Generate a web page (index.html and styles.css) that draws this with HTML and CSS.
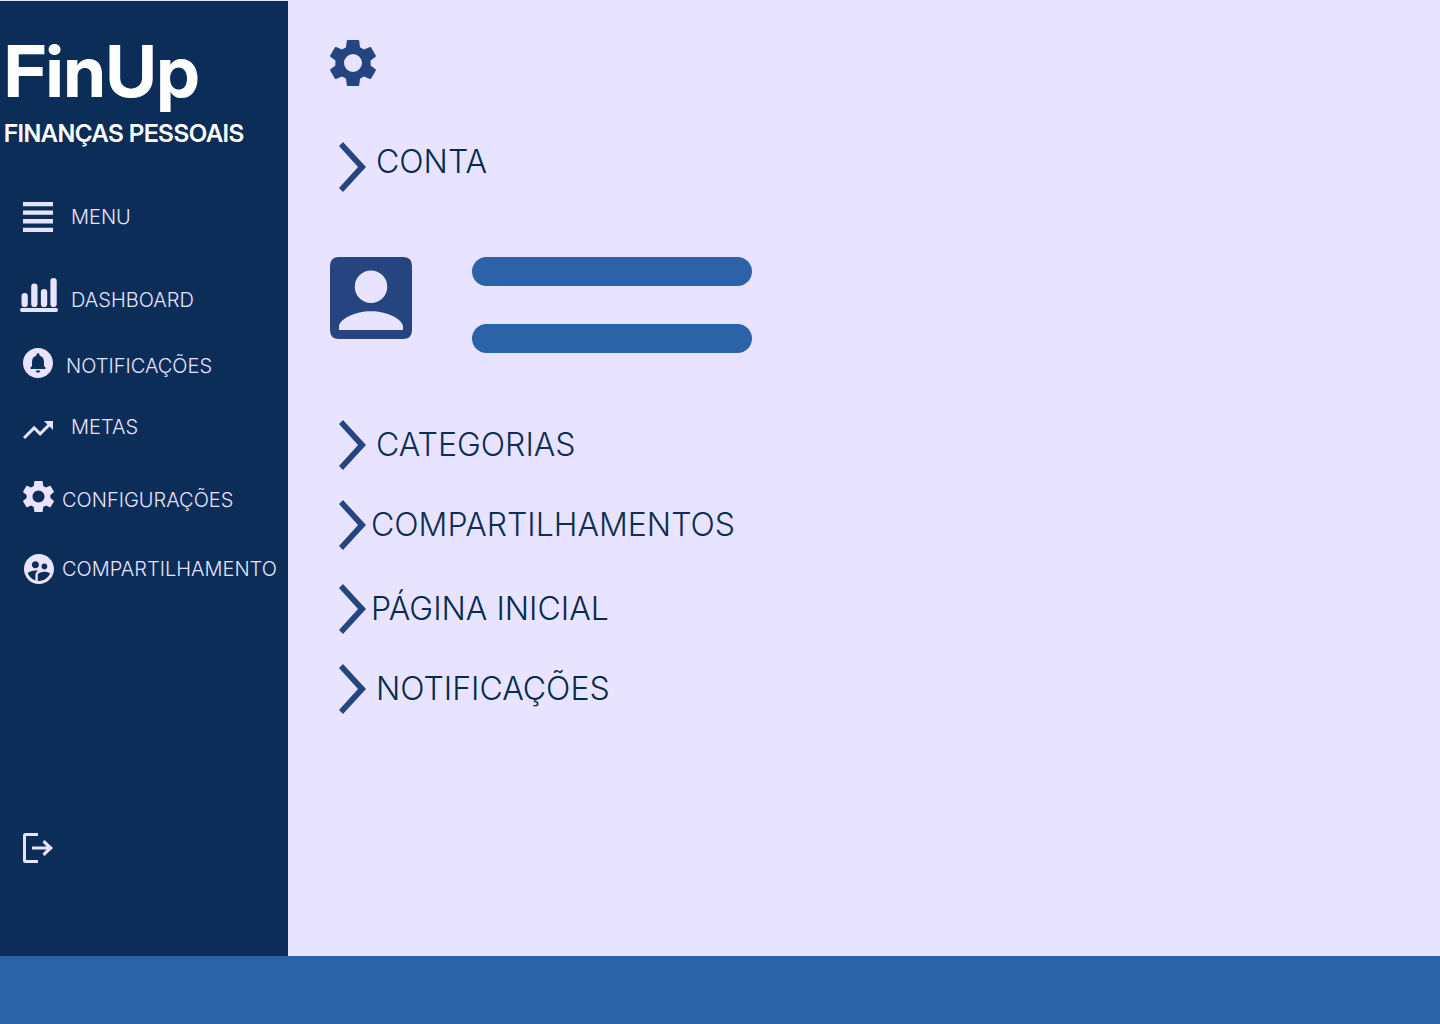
FILE: index.html
```html
<!DOCTYPE html>
<html lang="pt-BR">
<head>
<meta charset="utf-8">
<meta name="viewport" content="width=device-width, initial-scale=1">
<title>FinUp - Configurações</title>
<link rel="stylesheet" href="styles.css">
</head>
<body>
<svg class="sprite" aria-hidden="true">
  <symbol id="gear" viewBox="0 0 46 46">
    <path fill-rule="evenodd" d="M17.6 0H28.4Q29 0 29.2 .8L30 7.3L34 9.5L39.900 7Q40.600 6.800 41 7.300L45.800 15.500Q46.100 16.200 45.600 16.700L40.600 20.600V25.400L45.600 29.300Q46.100 29.800 45.800 30.500L41 38.700Q40.600 39.200 39.900 39L34 36.500L30 38.700L29.200 45.200Q29 46 28.400 46H17.600Q17 46 16.800 45.200L16 38.700L12 36.500L6.100 39Q5.400 39.200 5 38.700L.200 30.500Q-.1 29.800 .4 29.300L5.400 25.400V20.600L.4 16.700Q-.1 16.200 .2 15.500L5 7.300Q5.400 6.800 6.100 7L12 9.500L16 7.300L16.800 .8Q17 0 17.600 0ZM23 14a9 9 0 1 0 0 18a9 9 0 1 0 0-18Z"/>
  </symbol>
  <symbol id="chevron" viewBox="0 0 27 50">
    <path d="M0 4L4 0L27 25L4 50L0 46L19 25Z"/>
  </symbol>
</svg>

<div class="layout">
  <aside class="sidebar">
    <div class="brand">
      <p class="brand-name">FinUp</p>
      <p class="brand-tagline">FINANÇAS PESSOAIS</p>
    </div>
    <nav class="nav" aria-label="Principal">
      <a class="nav-link menu" href="#menu">
        <svg class="icon" viewBox="0 0 30 30" aria-hidden="true"><path d="M0 0h30v4.200H0zM0 8.400h30v4.400H0zM0 17h30v4.400H0zM0 25.700h30V30H0z"/></svg>
        <span>MENU</span>
      </a>
      <a class="nav-link dashboard" href="#dashboard">
        <svg class="icon icon-chart" viewBox="0 0 38 34" aria-hidden="true"><rect x="1.500" y="15" width="6.300" height="14" rx="3.100"/><rect x="11.200" y="5.500" width="6.300" height="23.500" rx="3.100"/><rect x="20.900" y="11" width="6.300" height="18" rx="3.100"/><rect x="30.400" y="0" width="6.300" height="29" rx="3.100"/><rect y="30" width="38" height="4" rx="2"/></svg>
        <span>DASHBOARD</span>
      </a>
      <a class="nav-link notifications" href="#notificacoes">
        <svg class="icon" viewBox="2 2 20 20" aria-hidden="true"><path d="M12 2C6.480 2 2 6.480 2 12s4.480 10 10 10 10-4.480 10-10S17.520 2 12 2zm0 16.500c-.83 0-1.500-.67-1.500-1.500h3c0 .83-.67 1.500-1.500 1.500zm5-2.500H7v-1l1-1v-2.610C8 9.270 9.030 7.470 11 7v-.5c0-.57.43-1 1-1s1 .43 1 1V7c1.970.47 3 2.280 3 4.390V14l1 1v1z"/></svg>
        <span>NOTIFICAÇÕES</span>
      </a>
      <a class="nav-link goals" href="#metas">
        <svg class="icon icon-trend" viewBox="2 6 20 12" aria-hidden="true"><path d="M16 6l2.290 2.290-4.880 4.880-4-4L2 16.590 3.410 18l6-6 4 4 6.300-6.290L22 12V6z"/></svg>
        <span>METAS</span>
      </a>
      <a class="nav-link settings" href="#configuracoes" aria-current="page">
        <svg class="icon icon-gear" aria-hidden="true"><use href="#gear"/></svg>
        <span>CONFIGURAÇÕES</span>
      </a>
      <a class="nav-link sharing" href="#compartilhamento">
        <svg class="icon" viewBox="2 2 20 20" aria-hidden="true"><path d="M11.990 2c-5.520 0-10 4.480-10 10s4.480 10 10 10 10-4.480 10-10-4.480-10-10-10zm3.610 6.340c1.070 0 1.930.86 1.930 1.930 0 1.070-.86 1.930-1.930 1.930-1.070 0-1.930-.86-1.930-1.930-.01-1.070.86-1.930 1.930-1.930zm-6-1.580c1.300 0 2.360 1.060 2.360 2.360 0 1.300-1.060 2.360-2.360 2.360s-2.360-1.060-2.360-2.360c0-1.310 1.050-2.360 2.360-2.360zm0 9.130v3.750c-2.400-.75-4.300-2.600-5.140-4.960 1.050-1.120 3.670-1.690 5.140-1.690.53 0 1.200.08 1.900.22-1.640.87-1.900 2.020-1.900 2.680zM11.990 20c-.27 0-.53-.01-.79-.04v-4.070c0-1.420 2.940-2.130 4.400-2.130 1.070 0 2.920.39 3.840 1.150-1.170 2.970-4.060 5.090-7.450 5.090z"/></svg>
        <span>COMPARTILHAMENTO</span>
      </a>
    </nav>
    <a class="logout" href="#sair" aria-label="Sair">
      <svg class="icon" viewBox="0 0 30 30" aria-hidden="true"><path d="M15 0v3H3v24h12v3H2.500Q0 30 0 27.500v-25Q0 0 2.500 0zM9 13.500h14.500l-4-4.200 2-2.300L30 15l-8.500 8-2-2.200 4-4.300H9z"/></svg>
    </a>
  </aside>

  <main class="content">
    <svg class="page-icon" role="img" aria-label="Configurações"><use href="#gear"/></svg>

    <button class="section section-open deep" type="button" aria-expanded="true">
      <svg class="chevron" aria-hidden="true"><use href="#chevron"/></svg>
      <span>CONTA</span>
    </button>
    <div class="account">
      <svg class="avatar" viewBox="0 0 82 82" role="img" aria-label="Foto do perfil">
        <path fill-rule="evenodd" d="M9 0H73Q82 0 82 9V73Q82 82 73 82H9Q0 82 0 73V9Q0 0 9 0ZM41 13.500a16 16 0 1 0 0 32.500a16 16 0 1 0 0-32.500ZM9 73H73V69C72 62 57 54.200 41 54.200S10 62 9 69Z"/>
      </svg>
      <div class="fields">
        <input class="field" type="text" aria-label="Nome">
        <input class="field" type="email" aria-label="E-mail">
      </div>
    </div>

    <div class="sections">
      <div class="section-group">
        <button class="section" type="button">
          <svg class="chevron" aria-hidden="true"><use href="#chevron"/></svg>
          <span>CATEGORIAS</span>
        </button>
        <button class="section tight" type="button">
          <svg class="chevron" aria-hidden="true"><use href="#chevron"/></svg>
          <span>COMPARTILHAMENTOS</span>
        </button>
      </div>
      <div class="section-group">
        <button class="section tight deep" type="button">
          <svg class="chevron" aria-hidden="true"><use href="#chevron"/></svg>
          <span>PÁGINA INICIAL</span>
        </button>
        <button class="section deep" type="button">
          <svg class="chevron" aria-hidden="true"><use href="#chevron"/></svg>
          <span>NOTIFICAÇÕES</span>
        </button>
      </div>
    </div>
  </main>
</div>
<footer class="footer"></footer>
</body>
</html>
```
FILE: styles.css
```css
:root {
  --navy: #0c2d57;
  --navy-deep: #032a50;
  --indigo: #264580;
  --blue: #2b62a8;
  --lavender: #e8e4ff;
}

* {
  box-sizing: border-box;
}

body {
  display: flex;
  flex-direction: column;
  min-height: 100vh;
  margin: 0;
  padding-top: 1px;
  background: var(--lavender);
  font-family: Inter, "Liberation Sans", sans-serif;
}

.sprite {
  display: none;
}

.layout {
  display: flex;
  flex: 1;
}

/* Sidebar */

.sidebar {
  display: flex;
  flex-direction: column;
  flex: 0 0 20%;
  min-width: 288px;
  padding: 28px 0 93px;
  background: var(--navy);
  color: var(--lavender);
}

.brand {
  display: flex;
  flex-direction: column;
  gap: 5px;
  padding-left: 4px;
  color: #fff;
  font-family: "Inter Display", Inter, "Liberation Sans", sans-serif;
}

.brand-name {
  margin: 0;
  font-size: 72px;
  font-weight: 700;
  line-height: 84px;
}

.brand-tagline {
  margin: 0;
  font-size: 24px;
  font-weight: 600;
  line-height: 32px;
}

.nav {
  display: flex;
  flex-direction: column;
  margin-top: 52px;
}

.nav-link {
  display: flex;
  align-items: flex-end;
  gap: 8px;
  padding-left: 23px;
  color: inherit;
  font-size: 20px;
  font-weight: 300;
  line-height: 24px;
  text-decoration: none;
}

.menu {
  align-items: center;
  gap: 18px;
  margin-bottom: 46px;
}

.dashboard {
  gap: 13px;
  margin-bottom: 36px;
  padding-left: 20px;
}

.notifications {
  gap: 13px;
  margin-bottom: 37px;
}

.goals {
  gap: 18px;
  margin-bottom: 42px;
}

.settings {
  margin-bottom: 42px;
}

.sharing {
  align-items: center;
  padding-left: 24px;
}

.icon {
  flex: none;
  display: block;
  width: 30px;
  height: 30px;
  fill: currentColor;
}

.icon-chart {
  width: 38px;
  height: 34px;
}

.icon-trend {
  height: 18px;
}

.icon-gear {
  width: 31px;
  height: 31px;
}

.logout {
  align-self: flex-start;
  margin-top: auto;
  margin-left: 23px;
  color: inherit;
}

/* Settings content */

.content {
  display: flex;
  flex-direction: column;
  align-items: flex-start;
  flex: 1;
  padding: 39px 42px;
}

.page-icon {
  width: 46px;
  height: 46px;
  fill: var(--indigo);
}

.section {
  display: flex;
  align-items: center;
  gap: 10px;
  margin-left: 9px;
  padding: 0;
  border: 0;
  background: none;
  color: var(--navy);
  font-family: inherit;
  font-size: 32px;
  font-weight: 300;
  line-height: 40px;
  cursor: pointer;
}

.section-open {
  align-items: flex-start;
  margin-top: 56px;
}

.tight {
  gap: 5px;
}

.deep {
  color: var(--navy-deep);
}

.chevron {
  flex: none;
  width: 27px;
  height: 50px;
  fill: var(--indigo);
}

.account {
  display: flex;
  align-items: flex-start;
  gap: 60px;
  margin-top: 65px;
}

.avatar {
  width: 82px;
  height: 82px;
  fill: var(--indigo);
}

.fields {
  display: flex;
  flex-direction: column;
  gap: 38px;
}

.field {
  width: 280px;
  height: 29px;
  padding: 0 16px;
  border: 0;
  border-radius: 15px;
  background: var(--blue);
  color: var(--lavender);
  font: inherit;
}

.sections {
  display: flex;
  flex-direction: column;
  gap: 34px;
  margin-top: 67px;
}

.section-group {
  display: flex;
  flex-direction: column;
  gap: 30px;
}

.footer {
  height: 68px;
  background: var(--blue);
}
```
